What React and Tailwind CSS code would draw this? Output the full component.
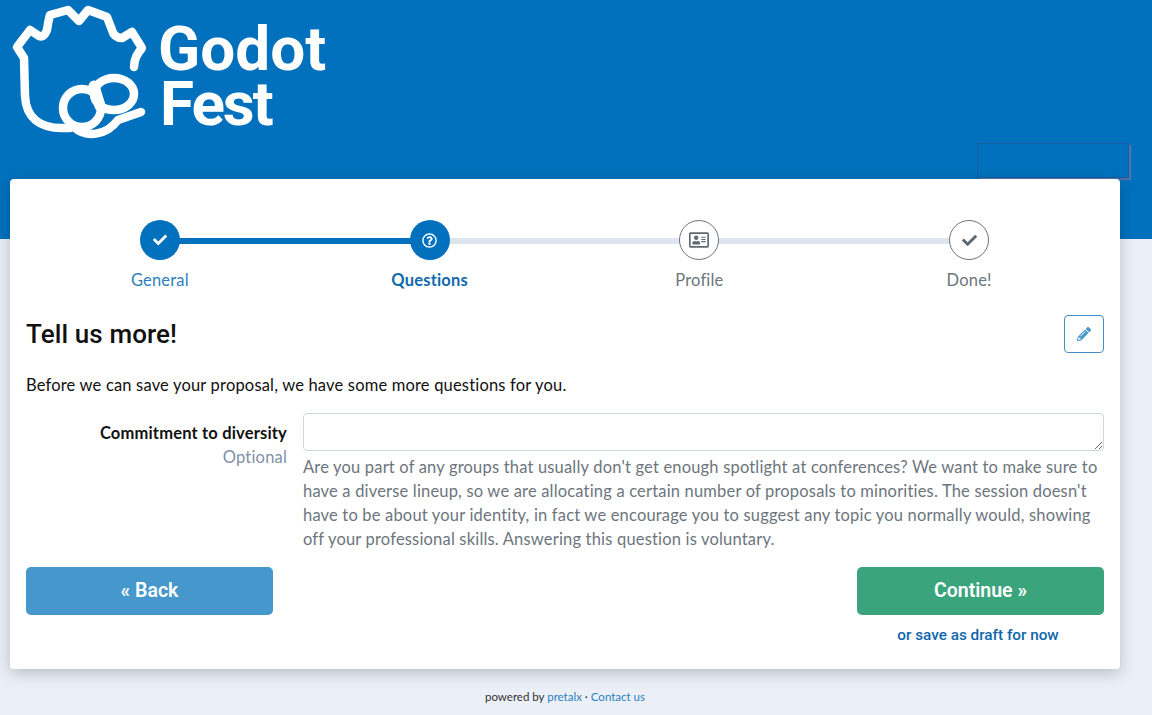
import React from "react";
import { FaCheck, FaRegQuestionCircle, FaRegAddressCard, FaPencilAlt } from "react-icons/fa";

function Logo() {
  return (
    <svg width="150" height="150" viewBox="0 0 150 150" className="shrink-0" fill="none" stroke="#fff" strokeWidth="8.5" strokeLinecap="round" strokeLinejoin="round">
      <path d="M134 67 C134 58 138 53 142 48 L132 32 L122 38 Q114 38 112 30 L107 17 L88 10 L79 21 L68 10 L50 15 Q48 22 47 30 Q44 38 39 36 L30 30 L17 47 L24 58 L25 96 C26 118 40 128 62 128 L70 128" />
      <circle cx="82" cy="108" r="19" />
      <ellipse cx="114" cy="94" rx="20" ry="16" />
      <path d="M94 86 L100 106" strokeWidth="11" />
      <path d="M74 127 C86 138 106 136 118 120 L141 112" />
    </svg>
  );
}

function Step({ label, active, done, bold, line, lineDone, children }) {
  return (
    <div className="relative flex flex-col items-center">
      {line && (
        <div className={`absolute left-1/2 top-[18px] h-[6px] w-full ${lineDone ? "bg-[#0271bd]" : "bg-[#dee5ee]"}`} />
      )}
      <div
        className={`relative flex h-10 w-10 items-center justify-center rounded-full ${
          active ? "bg-[#0271bd] text-white" : "border border-[#6c757d] bg-white text-[#5f6972]"
        }`}
      >
        {children}
      </div>
      <div
        className={`mt-2 text-[16.5px] leading-[24px] ${bold ? "font-bold text-[#0f69ad]" : done ? "text-[#2c7fbd]" : "text-[#6c757d]"}`}
      >
        {label}
      </div>
    </div>
  );
}

export default function App() {
  return (
    <div className="flex h-[715px] flex-col overflow-hidden bg-[#ebf0f8] font-['Lato','Noto_Sans',sans-serif] tracking-[0.18px] text-[#111]">
      <header className="flex h-[239px] shrink-0 items-start bg-[#0271bd]">
        <Logo />
        <div className="ml-[8px] mt-[21px] font-['Roboto',sans-serif] text-[62px] font-bold leading-[55px] tracking-normal text-white">
          <div>Godot</div>
          <div className="ml-[2px] tracking-[-2px]">Fest</div>
        </div>
        <div className="ml-auto mr-[23px] mt-[143px] h-[35px] w-[152px] border border-[#185fa6] shadow-[2px_2px_1px_#4f72a8]" />
      </header>

      <main className="mx-[10px] -mt-[60px] h-[490px] w-[1110px] shrink-0 rounded bg-white px-4 pt-[41px] shadow-[0_4px_16px_rgba(0,0,0,0.22)]">
        <div className="-ml-px grid grid-cols-4">
          <Step label="General" active done line lineDone><FaCheck size={14} /></Step>
          <Step label="Questions" active done bold line><FaRegQuestionCircle size={15} /></Step>
          <Step label="Profile" line><FaRegAddressCard size={20} /></Step>
          <Step label="Done!"><FaCheck size={15} /></Step>
        </div>

        <div className="mt-[23px] flex h-[38px] items-center justify-between">
          <h1 className="font-['Roboto',sans-serif] text-[26px] font-medium tracking-[0.1px] text-[#111]">Tell us more!</h1>
          <button className="flex h-[38px] w-10 items-center justify-center rounded border border-[#3f8fc5] text-[#4697cc]">
            <FaPencilAlt size={14} />
          </button>
        </div>

        <p className="mt-5 text-[16.5px] leading-[24px]">Before we can save your proposal, we have some more questions for you.</p>

        <div className="mt-4 flex">
          <div className="w-[261px] shrink-0 text-right text-[16.5px] leading-[24px]">
            <div className="mt-2 font-bold">Commitment to diversity</div>
            <div className="text-[#8090a8]">Optional</div>
          </div>
          <div className="ml-4 flex-1">
            <textarea className="block h-[38px] w-full rounded border border-[#ced4da] bg-white outline-none" />
            <p className="mt-[4px] text-[16.5px] leading-[24px] text-[#6c757d]">
              Are you part of any groups that usually don't get enough spotlight at conferences? We want to make sure to have a diverse lineup, so we are allocating a certain number of proposals to minorities. The session doesn't have to be about your identity, in fact we encourage you to suggest any topic you normally would, showing off your professional skills. Answering this question is voluntary.
            </p>
          </div>
        </div>

        <div className="mt-[16px] flex justify-between font-['Roboto',sans-serif] tracking-normal">
          <button className="h-12 w-[247px] rounded-[5px] bg-[#4697cc] text-[19.5px] font-semibold text-white">« Back</button>
          <div className="flex w-[247px] flex-col items-center">
            <button className="h-12 w-full rounded-[5px] bg-[#3aa57c] text-[19.5px] font-semibold text-white">Continue »</button>
            <a className="mr-[5px] mt-[9px] text-[15.3px] font-medium leading-[22px] text-[#0f66ab]">or save as draft for now</a>
          </div>
        </div>
      </main>

      <footer className="mt-5 w-[1130px] text-center text-[11.5px] leading-4 tracking-normal text-[#333]">
        powered by <a className="text-[#2c7fbd]">pretalx</a> · <a className="text-[#2c7fbd]">Contact us</a>
      </footer>
    </div>
  );
}
